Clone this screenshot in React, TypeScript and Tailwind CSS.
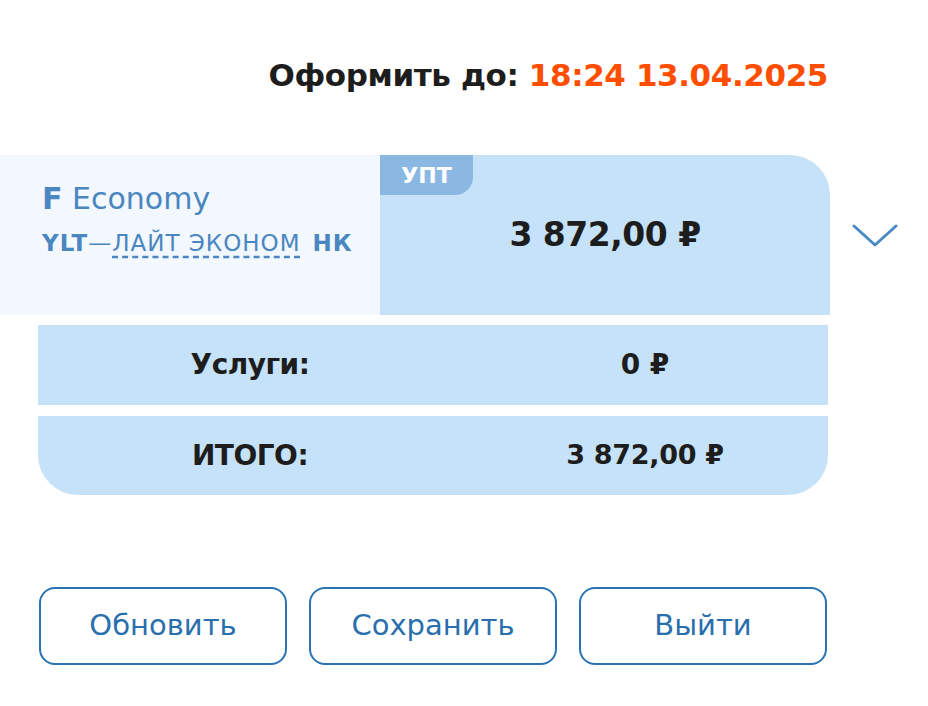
import React from "react";

const font = { fontFamily: '"DejaVu Sans", "Noto Sans", sans-serif' };

const Chevron = () => (
  <svg width="46" height="26" viewBox="0 0 46 26" fill="none">
    <path d="M2 3 L23 22 L44 3" stroke="#4a8ac4" strokeWidth="3" strokeLinecap="round" strokeLinejoin="round" />
  </svg>
);

export default function App() {
  return (
    <div className="w-[928px] h-[706px] bg-white text-[#1d1d1d]" style={font}>
      <div className="flex justify-end pr-[100px] pt-[55px]">
        <h1 className="text-[31px] font-semibold leading-[40px] tracking-[-0.4px]">
          Оформить до: <span className="text-[#ff4e00] font-bold">18:24 13.04.2025</span>
        </h1>
      </div>

      <div className="mt-[60px] flex items-center">
        <div className="flex w-[830px] h-[160px]">
          <div className="w-[380px] bg-[#f2f8fe] pl-[42px] pt-[25px] text-[#4a86c0]">
            <div className="text-[30px] leading-[38px]">
              <span className="font-bold">F</span> Economy
            </div>
            <div className="mt-[10px] text-[23px] leading-[30px] tracking-[1px]">
              <span className="font-bold">YLT</span>—
              <span className="underline decoration-dashed decoration-[#4a86c0] underline-offset-[5px]">ЛАЙТ ЭКОНОМ</span>
              <span className="font-bold ml-[12px]">НК</span>
            </div>
          </div>
          <div className="relative flex-1 bg-[#c5e2f8] rounded-tr-[40px] flex items-center justify-center">
            <div className="absolute left-0 top-0 w-[93px] h-[40px] bg-[#8bb8e2] rounded-br-[18px] flex items-center justify-center text-white font-bold text-[22px]">
              УПТ
            </div>
            <span className="text-[33px] font-bold tracking-[-0.5px]">3 872,00 ₽</span>
          </div>
        </div>
        <div className="ml-[22px] mt-[2px]">
          <Chevron />
        </div>
      </div>

      <div className="ml-[38px] w-[790px] mt-[10px] flex flex-col gap-[11px]">
        <div className="grid grid-cols-[424px_1fr] items-center h-[80px] bg-[#c5e2f8]">
          <span className="text-center text-[28px] font-bold tracking-[-0.5px]">Услуги:</span>
          <span className="text-center text-[28px] font-semibold">0 ₽</span>
        </div>
        <div className="grid grid-cols-[424px_1fr] items-center h-[79px] bg-[#c5e2f8] rounded-b-[40px]">
          <span className="text-center text-[28px] font-bold tracking-[-0.5px]">ИТОГО:</span>
          <span className="text-center text-[27px] font-semibold tracking-[-0.3px]">3 872,00 ₽</span>
        </div>
      </div>

      <div className="ml-[39px] mt-[92px] flex gap-[22px]">
        {["Обновить", "Сохранить", "Выйти"].map((t) => (
          <button
            key={t}
            className="w-[248px] h-[78px] rounded-[16px] border-2 border-[#2a74b4] text-[#2a6fad] text-[29px] bg-white"
          >
            {t}
          </button>
        ))}
      </div>
    </div>
  );
}
